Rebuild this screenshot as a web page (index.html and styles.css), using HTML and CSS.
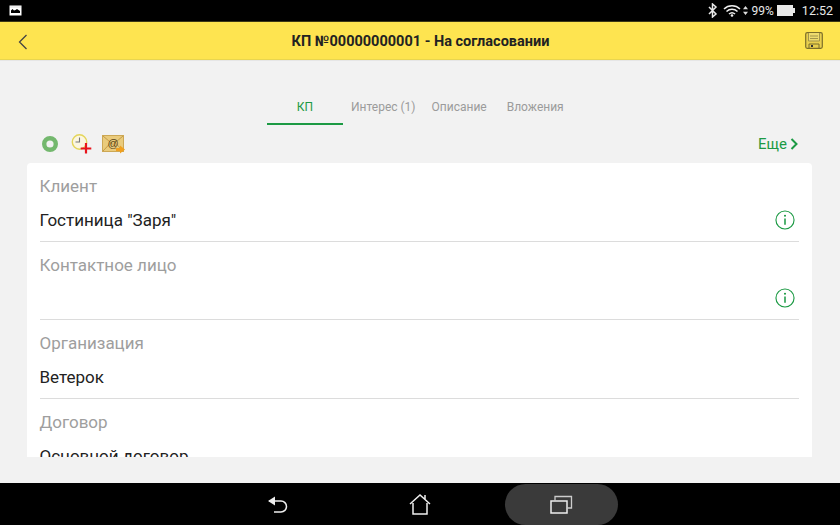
FILE: index.html
```html
<!DOCTYPE html>
<html lang="ru">
<head>
<meta charset="utf-8">
<title>КП</title>
<link rel="stylesheet" href="styles.css">
</head>
<body>
<div class="status">
  <svg class="pic" width="13" height="11" viewBox="0 0 13 11"><rect x="0.5" y="0.5" width="12" height="10" fill="#fff"/><rect x="1" y="1" width="11" height="2" fill="#eee"/><path d="M2 8V5.5L3.5 4 5 5.5 6.5 5 8 4 11 6V8Z" fill="#000"/></svg>
  <div class="status-right">
    <svg class="bt" width="10" height="15" viewBox="0 0 10 15"><path d="M1 4l7 7-3.5 3V1L8 4 1 11" fill="none" stroke="#e8e8e8" stroke-width="1.5"/></svg>
    <svg class="wifi" width="18" height="13" viewBox="0 0 18 13"><path d="M1 5a11.5 11.5 0 0 1 16 0M3.5 7.5a8 8 0 0 1 11 0M6 10a4.500 4.500 0 0 1 6 0" fill="none" stroke="#eee" stroke-width="1.500"/><circle cx="9" cy="11.500" r="1.300" fill="#eee"/></svg>
    <svg class="arrows" width="5" height="11" viewBox="0 0 6 11"><path d="M3 0l3 4H0zM3 11L0 7h6z" fill="#ddd"/></svg>
    <span class="pct">99%</span>
    <svg class="batt" width="18" height="11" viewBox="0 0 18 11"><rect width="16" height="11" fill="#e8e8e8"/><rect x="16" y="3" width="2" height="5" fill="#e8e8e8"/></svg>
    <span class="time">12:52</span>
  </div>
</div>
<header class="header">
  <svg class="back" width="10" height="16" viewBox="0 0 10 16"><path d="M8.500 1L1.500 8l7 7" fill="none" stroke="#444" stroke-width="1.300"/></svg>
  <h1 class="title">КП №00000000001 - На согласовании</h1>
  <svg class="save" width="18" height="17" viewBox="0 0 18 17"><rect x="0.700" y="0.700" width="16.600" height="15.600" rx="1.500" fill="#e8cf4e" stroke="#7d6f2a" stroke-width="1.200"/><path d="M3.500 1v8h11V1" fill="#efdc6e" stroke="#a3954a"/><path d="M5 4h8M5 6.500h8" stroke="#a3954a"/><path d="M4 16v-4h10v4" fill="none" stroke="#7d6f2a"/><rect x="6" y="13" width="2" height="2" fill="#333"/></svg>
</header>
<main class="main">
  <nav class="tabs">
    <span class="tab tab-active">КП</span>
    <span class="tab tab-int">Интерес (1)</span>
    <span class="tab tab-desc">Описание</span>
    <span class="tab">Вложения</span>
  </nav>
  <div class="toolbar">
    <svg class="tool-ring" width="16" height="16" viewBox="0 0 16 16"><circle cx="8" cy="8" r="5.800" fill="#f2f2f2" stroke="#74b86e" stroke-width="4.400"/></svg>
    <svg class="tool-clock" width="21" height="20" viewBox="0 0 21 20"><circle cx="8.500" cy="8" r="7.200" fill="#fbf6e0" stroke="#e4d55a" stroke-width="1.400"/><path d="M8.500 3.500v4.500h-4" fill="none" stroke="#777" stroke-width="1.100"/><path d="M15 9v10.500M9.700 14.500h10.600" stroke="#e8141c" stroke-width="2.200"/></svg>
    <svg class="tool-mail" width="23" height="19" viewBox="0 0 23 19"><rect x="0.500" y="0.500" width="21" height="16" fill="#eacb7c" stroke="#cda855"/><path d="M1 1l10 8.500L21 1M1 16l7.500-8M21 16l-7.500-8" fill="none" stroke="#b98f3c" stroke-width="0.800"/><text class="mail-at" x="11" y="11.500">@</text><path d="M14 13h4v-2.500l5 4-5 4V16h-4z" fill="#f0a020"/></svg>
    <span class="more">Еще<svg class="more-arrow" width="8" height="12" viewBox="0 0 8 12"><path d="M1.500 1l5 5-5 5" fill="none" stroke="#1c9a44" stroke-width="2"/></svg></span>
  </div>
  <section class="card">
    <div class="field">
      <div class="label">Клиент</div>
      <div class="value-row"><span class="value">Гостиница "Заря"</span>
        <svg class="info" width="20" height="20" viewBox="0 0 21 21"><circle cx="10.500" cy="10.500" r="9.500" fill="none" stroke="#1c9a44" stroke-width="1.200"/><path d="M10.500 9v6.500" stroke="#1c9a44" stroke-width="1.600"/><circle cx="10.500" cy="6" r="1.100" fill="#1c9a44"/></svg>
      </div>
    </div>
    <div class="field">
      <div class="label">Контактное лицо</div>
      <div class="value-row"><span class="value"></span>
        <svg class="info" width="20" height="20" viewBox="0 0 21 21"><circle cx="10.500" cy="10.500" r="9.500" fill="none" stroke="#1c9a44" stroke-width="1.200"/><path d="M10.500 9v6.500" stroke="#1c9a44" stroke-width="1.600"/><circle cx="10.500" cy="6" r="1.100" fill="#1c9a44"/></svg>
      </div>
    </div>
    <div class="field">
      <div class="label">Организация</div>
      <div class="value-row"><span class="value">Ветерок</span></div>
    </div>
    <div class="field">
      <div class="label">Договор</div>
      <div class="value-row"><span class="value">Основной договор</span></div>
    </div>
  </section>
</main>
<footer class="nav">
  <svg class="nav-back" width="22" height="20" viewBox="0 0 22 20"><path d="M2 6h12a5.500 5.500 0 0 1 0 11H7" fill="none" stroke="#eee" stroke-width="1.500"/><path d="M8 1.500v9L1 6z" fill="#eee"/></svg>
  <svg class="nav-home" width="22" height="22" viewBox="0 0 22 22"><path d="M1 11L11 2l10 9M4 10v11h14V10M16 6V2" fill="none" stroke="#eee" stroke-width="1.500"/></svg>
  <div class="pill">
    <svg width="23" height="19" viewBox="0 0 23 19"><rect x="1" y="6" width="16" height="12" fill="none" stroke="#eee" stroke-width="1.500"/><path d="M5 6V1.500h16.500V13H17" fill="none" stroke="#ccc" stroke-width="1.300"/></svg>
  </div>
</footer>
</body>
</html>
```
FILE: styles.css
```css
* { box-sizing: border-box; }
html, body { margin: 0; padding: 0; }
body {
  width: 840px;
  height: 525px;
  overflow: hidden;
  display: flex;
  flex-direction: column;
  background: #f2f2f2;
  font-family: Roboto, "Noto Sans", sans-serif;
}
.status {
  height: 21px;
  flex: none;
  background: #000;
  display: flex;
  align-items: center;
  justify-content: space-between;
  padding: 0 7px 0 9px;
  color: #e8e8e8;
}
.status-right { display: flex; align-items: center; }
.bt { margin-right: 5px; }
.wifi { margin-right: 2px; }
.arrows { margin-right: 4px; }
.pct { font-size: 12px; margin-right: 3px; }
.batt { margin-right: 7px; }
.time { font-size: 12.500px; }
.header {
  height: 39px;
  flex: none;
  background: #fee450;
  border-top: 1px solid #3c3716;
  border-bottom: 1px solid #e9d54f;
  display: flex;
  align-items: center;
  padding: 2px 17px 0 18px;
}
.save { margin-top: -2px; }
.title {
  flex: 1;
  margin: 0;
  text-align: center;
  font-size: 14.500px;
  font-weight: 700;
  color: #222;
  padding-left: 8px;
}
.main { flex: 1; min-height: 0; display: flex; flex-direction: column; padding: 0 27px; border-top: 1px solid #e6e6e6; }
.tabs {
  display: flex;
  margin-top: 32px;
  padding-left: 240px;
  height: 33px;
  font-size: 12px;
  color: #9b9b9b;
}
.tab { padding-top: 7px; line-height: 14px; }
.tab-active {
  width: 76px;
  text-align: center;
  color: #1c9a44;
  border-bottom: 2px solid #1c9a44;
  margin-right: 8px;
}
.tab-int { margin-right: 16px; }
.tab-desc { margin-right: 20px; }
.toolbar {
  height: 39px;
  display: flex;
  align-items: center;
  padding-left: 15px;
}
.tool-ring { margin-right: 13px; }
.tool-clock { margin-right: 10px; }
.mail-at { font-family: "Liberation Sans", sans-serif; font-size: 11px; text-anchor: middle; fill: #5a4518; }
.more {
  margin-left: auto;
  margin-right: 15px;
  display: flex;
  align-items: center;
  gap: 3px;
  font-size: 15px;
  color: #1c9a44;
}
.card {
  height: 294px;
  width: 785px;
  flex: none;
  background: #fff;
  border-radius: 4px 4px 0 0;
  overflow: hidden;
  padding: 0 13px 0 12.500px;
}
.field {
  height: 78.500px;
  border-bottom: 1px solid #dcdcdc;
  padding-top: 14px;
}
.label { font-size: 17px; line-height: 19px; color: #9e9e9e; }
.value-row {
  margin-top: 14px;
  height: 21px;
  display: flex;
  align-items: center;
  justify-content: space-between;
  padding-right: 4px;
}
.info { margin-top: -2px; }
.value { font-size: 17px; line-height: 19px; color: #222; }
.nav {
  height: 42px;
  flex: none;
  margin-top: 26px;
  background: #000;
  display: flex;
  align-items: center;
  padding-left: 267px;
}
.nav-home { margin-left: 120px; }
.nav-back { margin-top: 2px; }
.pill {
  width: 113px;
  height: 41px;
  margin-top: 1px;
  margin-left: 74px;
  background: #3a3a3a;
  border-radius: 21px;
  display: flex;
  align-items: center;
  justify-content: center;
}
```
